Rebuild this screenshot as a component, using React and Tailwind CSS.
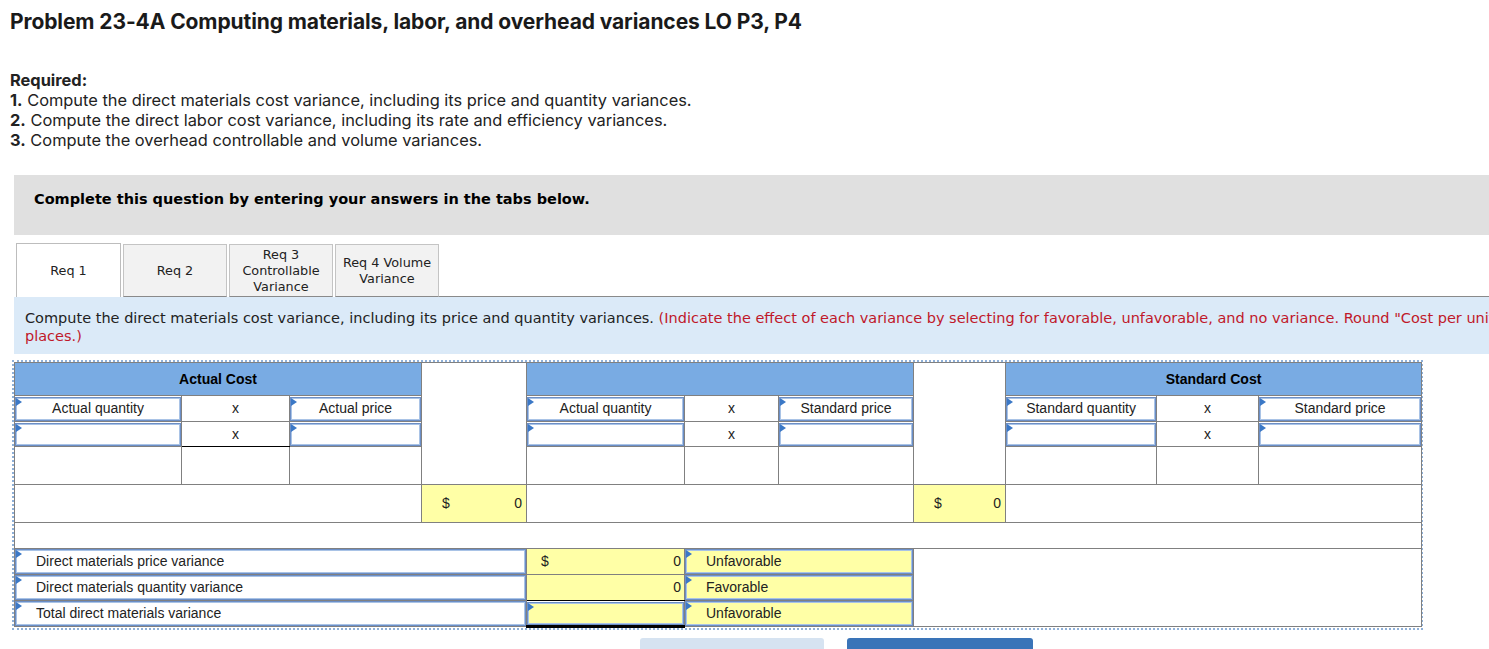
import React from "react";

const Tri = () => (
  <span className="absolute left-0 top-0 w-0 h-0 border-y-[4px] border-y-transparent border-l-[6px] border-l-[#3b78c6]" />
);

// blue-bordered entry box with the little marker in the corner
function Entry({ children, h = "h-[25px]", yellow = false, align = "center", className = "" }) {
  return (
    <div
      className={`relative ${h} border border-[#6b8ec6] shadow-[inset_0_0_0_1px_#a9c3e6] flex items-center ${
        align === "center" ? "justify-center" : "justify-start pl-[20px]"
      } ${yellow ? "bg-[#ffffa6]" : "bg-white"} ${className}`}
    >
      <Tri />
      {children}
    </div>
  );
}

const td = "border border-[#808080] p-0";

export default function App() {
  return (
    <div className="w-[1489px] h-[649px] overflow-hidden bg-white text-[#111]">
      {/* heading */}
      <h1 className="pl-[10px] pt-[10px] text-[21px] leading-[24px] font-bold font-['Inter',sans-serif] tracking-[-0.1px] text-[#1a1a1a]">
        Problem 23-4A Computing materials, labor, and overhead variances LO P3, P4
      </h1>

      <div className="pl-[10px] mt-[36px] font-['Inter',sans-serif] text-[16.4px] leading-[20px] text-[#222]">
        <p className="font-bold">Required:</p>
        <p><b>1.</b> Compute the direct materials cost variance, including its price and quantity variances.</p>
        <p><b>2.</b> Compute the direct labor cost variance, including its rate and efficiency variances.</p>
        <p><b>3.</b> Compute the overhead controllable and volume variances.</p>
      </div>

      {/* instructions bar */}
      <div className="ml-[14px] mt-[25px] w-[1600px] h-[60px] bg-[#e0e0e0] pl-[20px] pt-[16px] font-['DejaVu_Sans',Verdana,sans-serif] font-bold text-[14.5px] leading-[17px] text-black">
        Complete this question by entering your answers in the tabs below.
      </div>

      {/* tabs */}
      <div className="mt-[8px] flex items-end h-[54px] font-['DejaVu_Sans',Verdana,sans-serif] text-[12.8px] leading-[16px] text-[#222]">
        <div className="w-[16px] h-[1px]" />
        <div className="w-[105px] h-[54px] bg-white border border-b-0 border-[#bdbdbd] flex items-center justify-center">
          Req 1
        </div>
        {[
          ["Req 2"],
          ["Req 3", "Controllable", "Variance"],
          ["Req 4 Volume", "Variance"],
        ].map((lines, i) => (
          <div
            key={i}
            className="ml-[2px] w-[104px] h-[53px] bg-[#f2f2f2] border border-[#c4c4c4] border-b-[#8a8a8a] flex flex-col items-center justify-center text-center"
          >
            {lines.map((l) => (
              <span key={l}>{l}</span>
            ))}
          </div>
        ))}
        <div className="flex-1 h-[1px] bg-[#8a8a8a]" />
      </div>

      {/* prompt */}
      <div className="ml-[14px] w-[1631px] h-[57px] bg-[#dbeaf8] pl-[11px] pt-[12px] font-['DejaVu_Sans',sans-serif] text-[14.5px] leading-[18px] text-[#222]">
        Compute the direct materials cost variance, including its price and quantity variances.{" "}
        <span className="text-[#c0182a]">
          (Indicate the effect of each variance by selecting for favorable, unfavorable, and no variance. Round "Cost per unit" to 2 decimal places.)
        </span>
      </div>

      {/* worksheet */}
      <div className="ml-[12px] mt-[6px] w-[1411px] border-2 border-dotted border-[#8fb0d8] font-['Liberation_Sans',Arial,sans-serif] text-[14px] text-[#222]">
        <table className="table-fixed border-collapse w-[1407px]">
          <colgroup>
            {[167, 108, 132, 105, 158, 94, 135, 92, 151, 102, 163].map((w, i) => (
              <col key={i} style={{ width: w }} />
            ))}
          </colgroup>
          <tbody>
            <tr className="h-[33px]">
              <td colSpan={3} className={`${td} bg-[#79abe3] text-center font-bold text-black`}>Actual Cost</td>
              <td rowSpan={4} className={td} />
              <td colSpan={3} className={`${td} bg-[#79abe3]`} />
              <td rowSpan={4} className={td} />
              <td colSpan={3} className={`${td} bg-[#79abe3] text-center font-bold text-black`}>Standard Cost</td>
            </tr>
            <tr className="h-[26px]">
              <td className={td}><Entry h="h-[24px]">Actual quantity</Entry></td>
              <td className={`${td} text-center`}>x</td>
              <td className={td}><Entry h="h-[24px]">Actual price</Entry></td>
              <td className={td}><Entry h="h-[24px]">Actual quantity</Entry></td>
              <td className={`${td} text-center`}>x</td>
              <td className={td}><Entry h="h-[24px]">Standard price</Entry></td>
              <td className={td}><Entry h="h-[24px]">Standard quantity</Entry></td>
              <td className={`${td} text-center`}>x</td>
              <td className={td}><Entry h="h-[24px]">Standard price</Entry></td>
            </tr>
            <tr className="h-[25px]">
              <td className={td}><Entry h="h-[23px]" /></td>
              <td className={`${td} text-center border-b-[#000]`}>x</td>
              <td className={td}><Entry h="h-[23px]" /></td>
              <td className={td}><Entry h="h-[23px]" /></td>
              <td className={`${td} text-center`}>x</td>
              <td className={td}><Entry h="h-[23px]" /></td>
              <td className={td}><Entry h="h-[23px]" /></td>
              <td className={`${td} text-center`}>x</td>
              <td className={td}><Entry h="h-[23px]" /></td>
            </tr>
            <tr className="h-[38px]">
              <td className={td} /><td className={td} /><td className={td} />
              <td className={td} /><td className={td} /><td className={td} />
              <td className={td} /><td className={td} /><td className={td} />
            </tr>
            <tr className="h-[38px]">
              <td colSpan={3} className={td} />
              <td className={`${td} bg-[#ffffa6]`}>
                <div className="flex justify-between pl-[20px] pr-[4px]"><span>$</span><span>0</span></div>
              </td>
              <td colSpan={3} className={td} />
              <td className={`${td} bg-[#ffffa6]`}>
                <div className="flex justify-between pl-[20px] pr-[4px]"><span>$</span><span>0</span></div>
              </td>
              <td colSpan={3} className={td} />
            </tr>
            <tr className="h-[26px]">
              <td colSpan={11} className={td} />
            </tr>
            <tr className="h-[26px]">
              <td colSpan={4} className={td}><Entry align="left">Direct materials price variance</Entry></td>
              <td className={`${td} bg-[#ffffa6]`}>
                <div className="flex justify-between pl-[14px] pr-[3px]"><span>$</span><span>0</span></div>
              </td>
              <td colSpan={2} className={td}><Entry yellow align="left">Unfavorable</Entry></td>
              <td colSpan={4} rowSpan={3} className={td} />
            </tr>
            <tr className="h-[26px]">
              <td colSpan={4} className={td}><Entry align="left">Direct materials quantity variance</Entry></td>
              <td className={`${td} bg-[#ffffa6] border-b-[#000]`}>
                <div className="flex justify-end pr-[3px]"><span>0</span></div>
              </td>
              <td colSpan={2} className={td}><Entry yellow align="left">Favorable</Entry></td>
            </tr>
            <tr className="h-[26px]">
              <td colSpan={4} className={td}><Entry align="left">Total direct materials variance</Entry></td>
              <td className={`${td} border-b-[3px] border-b-double border-b-[#000]`}>
                <Entry h="h-[23px]" yellow />
              </td>
              <td colSpan={2} className={td}><Entry yellow align="left">Unfavorable</Entry></td>
            </tr>
          </tbody>
        </table>
      </div>

      {/* nav buttons */}
      <div className="mt-[8px] flex pl-[640px] gap-[23px]">
        <div className="w-[184px] h-[40px] rounded-t-[3px] bg-[#d6e3f1]" />
        <div className="w-[186px] h-[40px] rounded-t-[3px] bg-[#3a74b8]" />
      </div>
    </div>
  );
}
